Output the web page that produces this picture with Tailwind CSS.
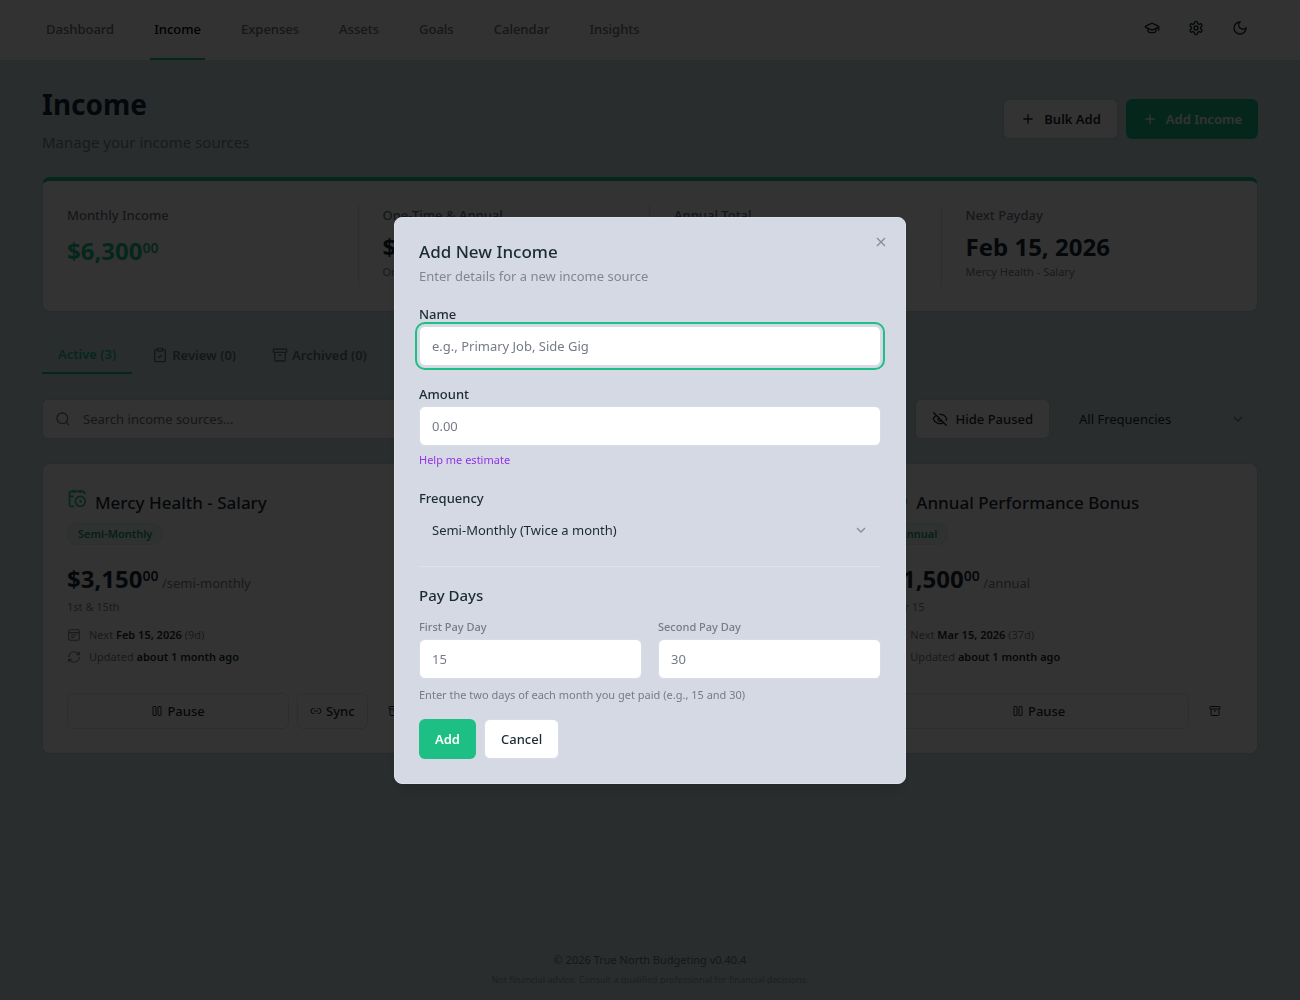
<!DOCTYPE html>
<html lang="en">
<head>
  <meta charset="UTF-8" />
  <meta name="viewport" content="width=device-width, initial-scale=1.0" />
  <title>Income - True North Budgeting</title>
  <script src="https://cdn.jsdelivr.net/npm/@tailwindcss/browser@4"></script>
</head>
<body class="min-h-screen flex flex-col bg-[#cde0e4] text-[#1b2a35] text-[13px] leading-5 font-['Noto_Sans',sans-serif]">

  <!-- icon sprite -->
  <svg class="hidden">
    <symbol id="plus" viewBox="0 0 24 24"><path d="M5 12h14M12 5v14" /></symbol>
    <symbol id="cap" viewBox="0 0 24 24"><path d="M21.42 10.922a1 1 0 0 0-.019-1.838L12.83 5.18a2 2 0 0 0-1.66 0L2.6 9.08a1 1 0 0 0 0 1.832l8.57 3.908a2 2 0 0 0 1.66 0z" /><path d="M22 10v6M6 12.5V16a6 3 0 0 0 12 0v-3.5" /></symbol>
    <symbol id="gear" viewBox="0 0 24 24"><path d="M12.22 2h-.44a2 2 0 0 0-2 2v.18a2 2 0 0 1-1 1.73l-.43.25a2 2 0 0 1-2 0l-.15-.08a2 2 0 0 0-2.73.73l-.22.38a2 2 0 0 0 .73 2.73l.15.1a2 2 0 0 1 1 1.72v.51a2 2 0 0 1-1 1.74l-.15.09a2 2 0 0 0-.73 2.73l.22.38a2 2 0 0 0 2.73.73l.15-.08a2 2 0 0 1 2 0l.43.25a2 2 0 0 1 1 1.73V20a2 2 0 0 0 2 2h.44a2 2 0 0 0 2-2v-.18a2 2 0 0 1 1-1.73l.43-.25a2 2 0 0 1 2 0l.15.08a2 2 0 0 0 2.73-.73l.22-.39a2 2 0 0 0-.73-2.73l-.15-.08a2 2 0 0 1-1-1.74v-.5a2 2 0 0 1 1-1.74l.15-.09a2 2 0 0 0 .73-2.73l-.22-.38a2 2 0 0 0-2.73-.73l-.15.08a2 2 0 0 1-2 0l-.43-.25a2 2 0 0 1-1-1.73V4a2 2 0 0 0-2-2z" /><circle cx="12" cy="12" r="3" /></symbol>
    <symbol id="moon" viewBox="0 0 24 24"><path d="M12 3a6 6 0 0 0 9 9 9 9 0 1 1-9-9z" /></symbol>
    <symbol id="clipboard" viewBox="0 0 24 24"><rect x="8" y="2" width="8" height="4" rx="1" /><path d="M16 4h2a2 2 0 0 1 2 2v14a2 2 0 0 1-2 2H6a2 2 0 0 1-2-2V6a2 2 0 0 1 2-2h2M9 14l2 2 4-4" /></symbol>
    <symbol id="archive" viewBox="0 0 24 24"><rect x="2" y="3" width="20" height="5" rx="1" /><path d="M4 8v11a2 2 0 0 0 2 2h12a2 2 0 0 0 2-2V8M10 12h4" /></symbol>
    <symbol id="search" viewBox="0 0 24 24"><circle cx="11" cy="11" r="8" /><path d="m21 21-4.3-4.3" /></symbol>
    <symbol id="eye-off" viewBox="0 0 24 24"><path d="M10.733 5.076a10.744 10.744 0 0 1 11.205 6.575 1 1 0 0 1 0 .696 10.747 10.747 0 0 1-1.444 2.49M14.084 14.158a3 3 0 0 1-4.242-4.242M17.479 17.499a10.75 10.75 0 0 1-15.417-5.151 1 1 0 0 1 0-.696 10.75 10.75 0 0 1 4.446-5.143M2 2l20 20" /></symbol>
    <symbol id="chevron" viewBox="0 0 24 24"><path d="m6 9 6 6 6-6" /></symbol>
    <symbol id="calendar-clock" viewBox="0 0 24 24"><path d="M16 2v4M8 2v4M3 10h5M21 7.5V6a2 2 0 0 0-2-2H5a2 2 0 0 0-2 2v14a2 2 0 0 0 2 2h3.5M16 14v2.2l1.6 1" /><circle cx="16" cy="16" r="6" /></symbol>
    <symbol id="calendar" viewBox="0 0 24 24"><rect x="3" y="3" width="18" height="18" rx="2" /><path d="M3 8h18M7 12h10M7 16h6" /></symbol>
    <symbol id="refresh" viewBox="0 0 24 24"><path d="M3 12a9 9 0 0 1 9-9 9.75 9.75 0 0 1 6.74 2.74L21 8M21 3v5h-5M21 12a9 9 0 0 1-9 9 9.75 9.75 0 0 1-6.74-2.74L3 16M8 16H3v5" /></symbol>
    <symbol id="pause" viewBox="0 0 24 24"><rect x="4" y="3" width="6" height="18" rx="1" /><rect x="14" y="3" width="6" height="18" rx="1" /></symbol>
    <symbol id="link" viewBox="0 0 24 24"><path d="M9 17H7A5 5 0 0 1 7 7h2M15 7h2a5 5 0 1 1 0 10h-2M8 12h8" /></symbol>
    <symbol id="close" viewBox="0 0 24 24"><path d="M18 6 6 18M6 6l12 12" /></symbol>
  </svg>

  <header class="h-[60px] shrink-0 bg-[#f8f8f8] px-[42px] flex justify-between">
    <nav class="flex gap-8 font-medium text-[#6b7280]">
      <a href="#" class="px-1 flex items-center border-b-2 border-transparent">Dashboard</a>
      <a href="#" class="px-1 flex items-center border-b-2 border-[#1dbf84] text-black">Income</a>
      <a href="#" class="px-1 flex items-center border-b-2 border-transparent">Expenses</a>
      <a href="#" class="px-1 flex items-center border-b-2 border-transparent">Assets</a>
      <a href="#" class="px-1 flex items-center border-b-2 border-transparent">Goals</a>
      <a href="#" class="px-1 flex items-center border-b-2 border-transparent">Calendar</a>
      <a href="#" class="px-1 flex items-center border-b-2 border-transparent">Insights</a>
    </nav>
    <div class="flex items-center gap-2 pb-1">
      <button aria-label="Learn" class="size-9 grid place-items-center"><svg class="size-4 fill-none stroke-current stroke-2"><use href="#cap" /></svg></button>
      <button aria-label="Settings" class="size-9 grid place-items-center"><svg class="size-4 fill-none stroke-current stroke-2"><use href="#gear" /></svg></button>
      <button aria-label="Toggle theme" class="size-9 grid place-items-center"><svg class="size-4 fill-none stroke-current stroke-2"><use href="#moon" /></svg></button>
    </div>
  </header>

  <main class="px-[42px] pt-6 flex-1">
    <div class="flex items-center justify-between">
      <div>
        <h1 class="text-[28px] leading-10 font-bold">Income</h1>
        <p class="text-[15px] leading-6 mt-[6px] text-[#7b828d]">Manage your income sources</p>
      </div>
      <div class="flex gap-2 font-semibold">
        <button class="h-10 px-4 flex items-center gap-2 rounded-md bg-white bg-clip-padding border border-black/5"><svg class="size-4 fill-none stroke-current stroke-2"><use href="#plus" /></svg>Bulk Add</button>
        <button class="h-10 px-4 flex items-center gap-2 rounded-md bg-[#1dbf84] text-white"><svg class="size-4 fill-none stroke-current stroke-2"><use href="#plus" /></svg>Add Income</button>
      </div>
    </div>

    <section class="mt-[23px] bg-white bg-clip-padding rounded-lg border border-black/5 border-t-4 border-t-[#1dbf84] p-6 grid grid-cols-4 divide-x divide-gray-200">
      <div class="min-h-[82px]">
        <p class="font-medium text-[#6b7280]">Monthly Income</p>
        <p class="text-[24px] leading-8 mt-[10px] font-bold text-[#1dbf84]">$6,300<sup class="text-[14px] font-semibold">00</sup></p>
      </div>
      <div class="pl-6">
        <p class="font-medium text-[#6b7280]">One-Time &amp; Annual</p>
        <p class="text-[24px] leading-8 mt-[6px] font-bold">$1,500</p>
        <p class="text-[11px] leading-[18px] text-[#7b828d]">One-time</p>
      </div>
      <div class="pl-6">
        <p class="font-medium text-[#6b7280]">Annual Total</p>
        <p class="text-[24px] leading-8 mt-[6px] font-bold">$77,100</p>
      </div>
      <div class="pl-6">
        <p class="font-medium text-[#6b7280]">Next Payday</p>
        <p class="text-[24px] leading-8 mt-[6px] font-bold">Feb 15, 2026</p>
        <p class="text-[11px] leading-[18px] text-[#7b828d]">Mercy Health - Salary</p>
      </div>
    </section>

    <div class="mt-6 flex gap-1 font-semibold text-[#6b7280]">
      <button class="h-[38px] px-4 border-b-2 border-[#1dbf84] text-[#1dbf84]">Active (3)</button>
      <button class="h-[38px] px-4 flex items-center gap-1"><svg class="size-4 fill-none stroke-current stroke-2"><use href="#clipboard" /></svg>Review (0)</button>
      <button class="h-[38px] px-4 flex items-center gap-1"><svg class="size-4 fill-none stroke-current stroke-2"><use href="#archive" /></svg>Archived (0)</button>
    </div>

    <div class="mt-[25px] flex gap-4">
      <label class="h-10 flex-1 flex items-center gap-3 px-3 rounded-md bg-white bg-clip-padding border border-black/5">
        <svg class="size-4 fill-none stroke-[#6b7280] stroke-2"><use href="#search" /></svg>
        <input type="text" aria-label="Search income sources" placeholder="Search income sources..." class="flex-1 outline-none placeholder:text-[#6b7280]" />
      </label>
      <button class="h-10 px-4 flex items-center gap-2 rounded-md bg-white bg-clip-padding border border-black/5 font-medium"><svg class="size-4 fill-none stroke-current stroke-2"><use href="#eye-off" /></svg>Hide Paused</button>
      <div class="w-48 h-10 relative">
        <select aria-label="Frequency filter" class="appearance-none size-full px-3 border border-transparent"><option>All Frequencies</option></select>
        <svg class="size-4 absolute right-3 top-3 fill-none stroke-[#6b7280] stroke-2 pointer-events-none"><use href="#chevron" /></svg>
      </div>
    </div>

    <section class="mt-6 grid grid-cols-3 gap-4">
      <article class="bg-white rounded-lg border border-black/5 bg-clip-padding p-6">
        <h2 class="text-[17px] leading-[30px] font-medium flex gap-2"><svg class="size-5 fill-none stroke-[#1dbf84] stroke-2"><use href="#calendar-clock" /></svg>Mercy Health - Salary</h2>
        <span class="mt-[5px] h-[22px] px-[10px] inline-flex items-center rounded-full border border-[#1dbf84]/10 bg-[#1dbf84]/10 text-[11px] font-semibold text-[#1d9a6e]">Semi-Monthly</span>
        <p class="mt-[18px] leading-8 text-[#7b828d]"><span class="text-[24px] font-bold text-[#1b2a35]">$3,150<sup class="text-[14px] font-semibold">00</sup></span> /semi-monthly</p>
        <p class="text-[11px] leading-4 text-[#7b828d]">1st &amp; 15th</p>
        <p class="mt-3 text-[11px] leading-4 flex items-center gap-2 text-[#7b828d]"><svg class="size-[14px] fill-none stroke-current stroke-2"><use href="#calendar" /></svg><span>Next <b class="font-semibold text-[#1b2a35]">Feb 15, 2026</b> (9d)</span></p>
        <p class="mt-[6px] text-[11px] leading-4 flex items-center gap-2 text-[#7b828d]"><svg class="size-[14px] fill-none stroke-current stroke-2"><use href="#refresh" /></svg><span>Updated <b class="font-semibold text-[#1b2a35]">about 1 month ago</b></span></p>
        <div class="mt-7 flex gap-2 font-medium">
          <button class="h-9 flex-1 flex items-center justify-center gap-1 rounded-md border border-black/10"><svg class="size-3 fill-none stroke-current stroke-2"><use href="#pause" /></svg>Pause</button>
          <button class="h-9 px-3 flex items-center gap-1 rounded-md border border-black/10"><svg class="size-3 fill-none stroke-current stroke-2"><use href="#link" /></svg>Sync</button>
          <button aria-label="Archive" class="size-9 grid place-items-center"><svg class="size-3 fill-none stroke-current stroke-2"><use href="#archive" /></svg></button>
        </div>
      </article>
      <article class="bg-white rounded-lg border border-black/5 bg-clip-padding p-6"></article>
      <article class="bg-white rounded-lg border border-black/5 bg-clip-padding p-6">
        <h2 class="text-[17px] leading-[30px] font-medium flex gap-2"><svg class="size-5 fill-none stroke-[#1dbf84] stroke-2"><use href="#calendar-clock" /></svg>Annual Performance Bonus</h2>
        <span class="mt-[5px] h-[22px] px-[10px] inline-flex items-center rounded-full border border-[#1dbf84]/10 bg-[#1dbf84]/10 text-[11px] font-semibold text-[#1d9a6e]">Annual</span>
        <p class="mt-[18px] leading-8 text-[#7b828d]"><span class="text-[24px] font-bold text-[#1b2a35]">$1,500<sup class="text-[14px] font-semibold">00</sup></span> /annual</p>
        <p class="text-[11px] leading-4 text-[#7b828d]">Mar 15</p>
        <p class="mt-3 text-[11px] leading-4 flex items-center gap-2 text-[#7b828d]"><svg class="size-[14px] fill-none stroke-current stroke-2"><use href="#calendar" /></svg><span>Next <b class="font-semibold text-[#1b2a35]">Mar 15, 2026</b> (37d)</span></p>
        <p class="mt-[6px] text-[11px] leading-4 flex items-center gap-2 text-[#7b828d]"><svg class="size-[14px] fill-none stroke-current stroke-2"><use href="#refresh" /></svg><span>Updated <b class="font-semibold text-[#1b2a35]">about 1 month ago</b></span></p>
        <div class="mt-7 flex gap-2 font-medium">
          <button class="h-9 flex-1 flex items-center justify-center gap-1 rounded-md border border-black/10"><svg class="size-3 fill-none stroke-current stroke-2"><use href="#pause" /></svg>Pause</button>
          <button aria-label="Archive" class="size-9 grid place-items-center"><svg class="size-3 fill-none stroke-current stroke-2"><use href="#archive" /></svg></button>
        </div>
      </article>
    </section>
  </main>

  <footer class="pb-3 text-center text-[#6b7280]">
    <p class="text-[11px] leading-4">© 2026 True North Budgeting v0.40.4</p>
    <p class="text-[9px] leading-4 mt-1 opacity-60">Not financial advice. Consult a qualified professional for financial decisions.</p>
  </footer>

  <!-- add income modal -->
  <div class="fixed inset-0 bg-black/80 flex items-center justify-center">
    <form role="dialog" aria-labelledby="dialog-title" class="relative w-full max-w-lg rounded-lg border border-[#dde1e8] bg-[#d5d9e3] p-6 flex flex-col gap-4 shadow-lg">
      <button type="button" aria-label="Close" class="absolute right-4 top-4 text-[#868d97]"><svg class="size-4 fill-none stroke-current stroke-2"><use href="#close" /></svg></button>
      <div>
        <h2 id="dialog-title" class="text-[17px] leading-5 font-medium">Add New Income</h2>
        <p class="mt-1 text-[#808791]">Enter details for a new income source</p>
      </div>
      <div>
        <label for="name" class="block leading-6 font-medium">Name</label>
        <input id="name" type="text" placeholder="e.g., Primary Job, Side Gig" class="w-full h-10 px-3 rounded-md border border-[#d8dce4] bg-white outline-2 outline-offset-2 outline-[#1dbf84] placeholder:text-[#757b84]" />
      </div>
      <div>
        <label for="amount" class="block leading-6 font-medium">Amount</label>
        <input id="amount" type="text" placeholder="0.00" class="w-full h-10 px-3 rounded-md border border-[#d8dce4] bg-white placeholder:text-[#757b84]" />
        <button type="button" class="mt-1 block text-[11px] leading-5 text-[#9333ea]">Help me estimate</button>
      </div>
      <div>
        <label for="frequency" class="block leading-6 font-medium">Frequency</label>
        <div class="relative">
          <select id="frequency" class="appearance-none w-full h-10 px-3 border border-transparent"><option>Semi-Monthly (Twice a month)</option></select>
          <svg class="size-4 absolute right-3 top-3 fill-none stroke-[#868d97] stroke-2 pointer-events-none"><use href="#chevron" /></svg>
        </div>
      </div>
      <div class="border-t border-[#dfe2e8] pt-4">
        <h3 class="text-[15px] leading-6 font-medium">Pay Days</h3>
        <div class="mt-2 grid grid-cols-2 gap-4">
          <div>
            <label for="first-day" class="block text-[11px] leading-6 font-medium text-[#757c86]">First Pay Day</label>
            <input id="first-day" type="text" placeholder="15" class="w-full h-10 px-3 rounded-md border border-[#d8dce4] bg-white placeholder:text-[#757b84]" />
          </div>
          <div>
            <label for="second-day" class="block text-[11px] leading-6 font-medium text-[#757c86]">Second Pay Day</label>
            <input id="second-day" type="text" placeholder="30" class="w-full h-10 px-3 rounded-md border border-[#d8dce4] bg-white placeholder:text-[#757b84]" />
          </div>
        </div>
        <p class="mt-2 text-[11px] leading-4 text-[#757c86]">Enter the two days of each month you get paid (e.g., 15 and 30)</p>
      </div>
      <div class="flex gap-2">
        <button type="submit" class="h-10 px-4 rounded-md bg-[#1dbf84] text-white font-semibold">Add</button>
        <button type="button" class="h-10 px-4 rounded-md border border-[#d8dce4] bg-white font-medium">Cancel</button>
      </div>
    </form>
  </div>
</body>
</html>
